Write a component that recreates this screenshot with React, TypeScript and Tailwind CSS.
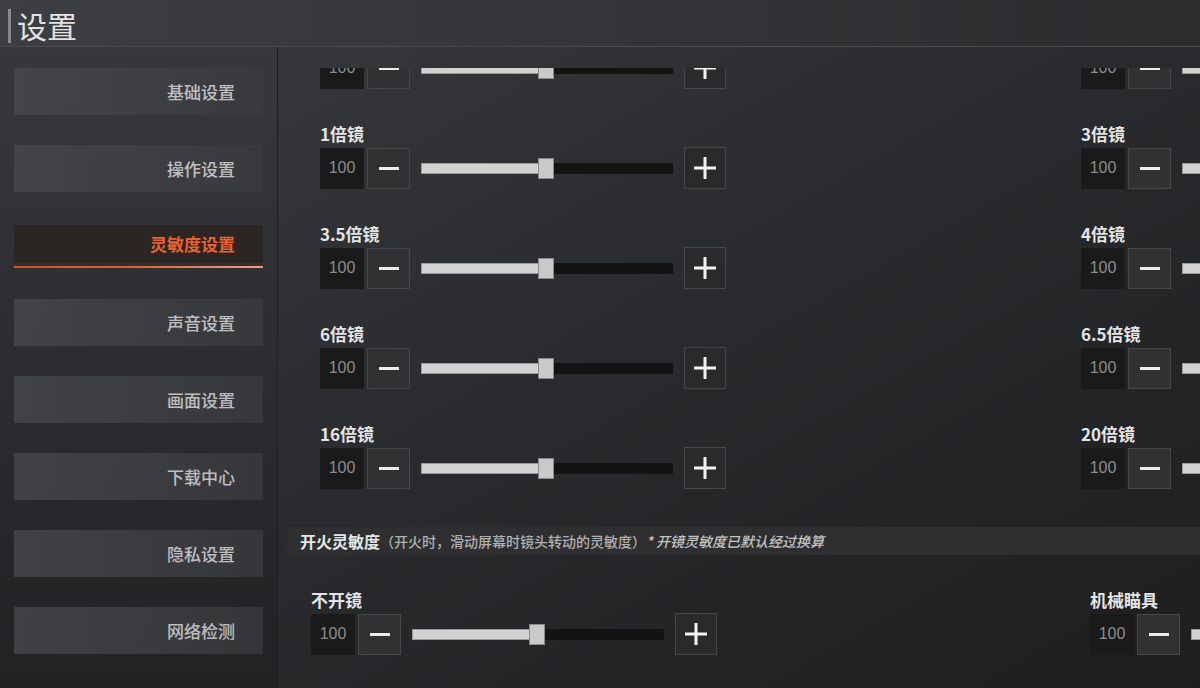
import React from "react";

type Row = { left: string; right: string };

const ROWS: Row[] = [
  { left: "红点、全息", right: "2倍镜" },
  { left: "1倍镜", right: "3倍镜" },
  { left: "3.5倍镜", right: "4倍镜" },
  { left: "6倍镜", right: "6.5倍镜" },
  { left: "16倍镜", right: "20倍镜" },
];

const MENU = [
  "基础设置",
  "操作设置",
  "灵敏度设置",
  "声音设置",
  "画面设置",
  "下载中心",
  "隐私设置",
  "网络检测",
];

const Stepper = ({ value, pct }: { value: number; pct: number }) => (
  <div className="flex items-center h-[42px]">
    <div className="w-[44px] h-[41px] bg-[#1a1a1b] flex items-center justify-center text-[16px] text-[#8c8c8c] font-['Liberation_Sans',sans-serif]">
      {value}
    </div>
    <button className="ml-[3px] w-[43px] h-[41px] border border-[#47474a] bg-[#313133] flex items-center justify-center">
      <span className="block w-[20px] h-[3px] bg-[#ececec]" />
    </button>
    <div className="ml-[11px] w-[252px] h-[11px] bg-[#131313] relative">
      <div
        className="h-full bg-[#d2d2d2] border border-[#9a9a9a]"
        style={{ width: `${pct}%` }}
      />
      <div
        className="absolute top-[-5px] w-[16px] h-[21px] bg-[#c9c9c9] border border-[#8a8a8a]"
        style={{ left: `calc(${pct}% - 9px)` }}
      />
    </div>
    <button className="ml-[11px] w-[42px] h-[42px] border border-[#47474a] bg-[#2a2a2c] flex items-center justify-center">
      <svg width="24" height="24" viewBox="0 0 24 24">
        <path d="M12 1v22M1 12h22" stroke="#f2f2f2" strokeWidth="3" />
      </svg>
    </button>
  </div>
);

const Setting = ({ label, pct = 50 }: { label: string; pct?: number }) => (
  <div className="flex flex-col">
    <div className="h-[20px] leading-[20px] text-[17px] font-bold text-[#e4e4e4]">
      {label}
    </div>
    <div className="mt-[3px]">
      <Stepper value={100} pct={pct} />
    </div>
  </div>
);

export default function App() {
  return (
    <div className="w-[1200px] h-[688px] overflow-hidden flex flex-col bg-gradient-to-br from-[#3b3c40] via-[#2a2b2e] to-[#1e1e20] font-['Noto_Sans_CJK_SC','Liberation_Sans',sans-serif]">
      {/* header */}
      <div className="h-[47px] shrink-0 flex items-center border-b border-[#4b4b4e] bg-gradient-to-r from-[#3d3e42] to-[#2c2c2f]">
        <div className="ml-[8px] w-[3px] h-[34px] mt-[6px] bg-[#8a8a8c]" />
        <div className="ml-[6px] mt-[4px] text-[30px] leading-[34px] text-[#e2e2e2]">
          设置
        </div>
      </div>

      <div className="flex flex-1 min-h-0">
        {/* sidebar */}
        <div className="w-[278px] shrink-0 border-r border-[#1f1f21] bg-gradient-to-b from-[#37383c] to-[#222225] pl-[14px] pt-[21px] flex flex-col gap-[30px]">
          {MENU.map((m) =>
            m === "灵敏度设置" ? (
              <div key={m} className="w-[249px] h-[47px] flex flex-col">
                <div className="mt-[3px] h-[38px] bg-[#2b2624] flex items-center justify-end pr-[28px] text-[17px] font-bold text-[#e8622b]">
                  {m}
                </div>
                <div className="mt-[3px] h-[2px] bg-gradient-to-r from-[#d4501c] via-[#e0642c] to-[#f0a080]" />
              </div>
            ) : (
              <div
                key={m}
                className="w-[249px] h-[47px] bg-gradient-to-r from-[#48494d] to-[#3a3b3e] opacity-80 flex items-center justify-end pr-[28px] text-[17px] font-medium text-[#e2e2e2]"
              >
                {m}
              </div>
            )
          )}
        </div>

        {/* content */}
        <div className="flex-1 pt-[21px] flex flex-col min-w-0">
          <div className="flex-1 overflow-hidden">
            <div className="mt-[-44px]">
              {ROWS.map((r) => (
                <div key={r.left} className="h-[100px] flex pl-[42px]">
                  <div className="w-[761px] shrink-0">
                    <Setting label={r.left} />
                  </div>
                  <div className="shrink-0">
                    <Setting label={r.right} />
                  </div>
                </div>
              ))}

              <div className="mt-[3px] ml-[9px] h-[28px] bg-[#2f2f32] flex items-center pl-[13px] whitespace-nowrap">
                <span className="text-[16px] font-bold text-[#e6e6e6]">开火灵敏度</span>
                <span className="text-[14px] font-medium text-[#b0b0b0]">
                  （开火时，滑动屏幕时镜头转动的灵敏度）
                </span>
                <span className="text-[14px] font-medium italic text-[#c4c4c4]">
                  * 开镜灵敏度已默认经过换算
                </span>
              </div>

              <div className="mt-[35px] flex pl-[33px]">
                <div className="w-[779px] shrink-0">
                  <Setting label="不开镜" />
                </div>
                <div className="shrink-0">
                  <Setting label="机械瞄具" />
                </div>
              </div>
            </div>
          </div>
        </div>
      </div>
    </div>
  );
}
